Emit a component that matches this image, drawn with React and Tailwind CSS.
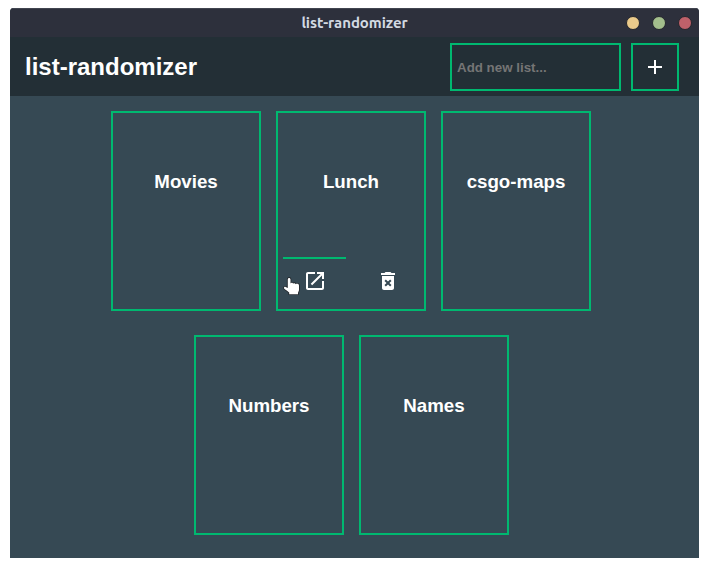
const ICONS = {
  add: 'M19 13h-6v6h-2v-6H5v-2h6V5h2v6h6v2z',
  open: 'M19 19H5V5h7V3H5c-1.11 0-2 .9-2 2v14c0 1.1.89 2 2 2h14c1.1 0 2-.9 2-2v-7h-2v7zM14 3v2h3.59l-9.83 9.83 1.41 1.41L19 6.41V10h2V3h-7z',
  remove:
    'M6 19c0 1.1.9 2 2 2h8c1.1 0 2-.9 2-2V7H6v12zm2.46-7.12l1.41-1.41L12 12.59l2.12-2.12 1.41 1.41L13.41 14l2.12 2.12-1.41 1.41L12 15.41l-2.12 2.12-1.41-1.41L10.59 14l-2.13-2.12zM15.5 4l-1-1h-5l-1 1H5v2h14V4z',
};

function Icon({ name }) {
  return (
    <svg viewBox="0 0 24 24" className="size-6 shrink-0 fill-white">
      <path d={ICONS[name]} />
    </svg>
  );
}

function Pointer() {
  return (
    <svg viewBox="0 0 20 22" className="absolute top-[17px] -left-0.5 h-[22px] w-5">
      <path
        d="M6.8 3.5c0-.9.6-1.5 1.3-1.5s1.4.6 1.4 1.5v4c.3-.9 2.3-.9 2.6.2.5-.8 2.2-.6 2.5.5.6-.6 3.4-.6 3.4 1.3v4.3c0 1.4-1 2.2-1 3.2v1.2H8.2v-1.6c-1-.9-2-1.9-3.2-2.6-1.2-.6-2-1.3-2-2.2 0-.8.8-1.2 1.6-.9l2.2 1.1z"
        className="fill-white stroke-[#262b30]"
        strokeWidth="1.8"
        strokeLinejoin="round"
        paintOrder="stroke"
      />
    </svg>
  );
}

function Card({ title, active }) {
  return (
    <div className="flex h-[200px] w-[150px] flex-col justify-between border-2 border-[#00b870] p-[5px]">
      <h3 className="pt-[53px] text-center text-[18.72px] leading-[22px] font-bold">{title}</h3>
      {active && (
        <div className="flex h-[47px] w-full justify-between">
          <button className="relative flex w-[63px] items-center justify-center border-t-2 border-[#00b870] pb-px">
            <Icon name="open" />
            <Pointer />
          </button>
          <button className="flex w-[63px] items-center justify-center border-t-2 border-transparent pb-px">
            <Icon name="remove" />
          </button>
        </div>
      )}
    </div>
  );
}

export default function App() {
  return (
    <div className="h-[568px] bg-white px-2.5 pt-2 font-['Liberation_Sans',Arial,sans-serif] text-white">
      <main className="h-[550px] overflow-hidden rounded-t-[4px] bg-[#364954]">
        <div className="grid h-[29px] grid-cols-[1fr_auto_1fr] items-center border-t border-[#414550] bg-[#2d303c] pr-[7px]">
          <span />
          <span className="pl-[7px] font-['Ubuntu','Noto_Sans',sans-serif] text-[15px] leading-5 font-bold tracking-[-0.05px] text-[#d3dae3]">
            list-randomizer
          </span>
          <div className="flex justify-end gap-3">
            <i className="size-3.5 rounded-full border border-[#25262d] bg-[#ebcb8b]" />
            <i className="size-3.5 rounded-full border border-[#25262d] bg-[#a3be8c]" />
            <i className="size-3.5 rounded-full border border-[#25262d] bg-[#bf616a]" />
          </div>
        </div>
        <header className="flex h-[59px] items-center bg-[#232f36] pr-5 pl-[15px]">
          <h1 className="mr-auto text-2xl leading-7 font-bold">list-randomizer</h1>
          <input
            placeholder="Add new list..."
            className="mt-px h-12 w-[171px] border-2 border-[#00b870] bg-transparent px-[5px] text-[13.333px] font-bold outline-none placeholder:text-[#757575]"
          />
          <button className="mt-px ml-2.5 flex size-12 items-center justify-center border-2 border-[#00b870]">
            <Icon name="add" />
          </button>
        </header>
        <section className="flex flex-col gap-6 pt-[15px]">
          <div className="flex gap-[15px] pl-[101px]">
            <Card title="Movies" />
            <Card title="Lunch" active />
            <Card title="csgo-maps" />
          </div>
          <div className="flex gap-[15px] pl-[184px]">
            <Card title="Numbers" />
            <Card title="Names" />
          </div>
        </section>
      </main>
    </div>
  );
}
